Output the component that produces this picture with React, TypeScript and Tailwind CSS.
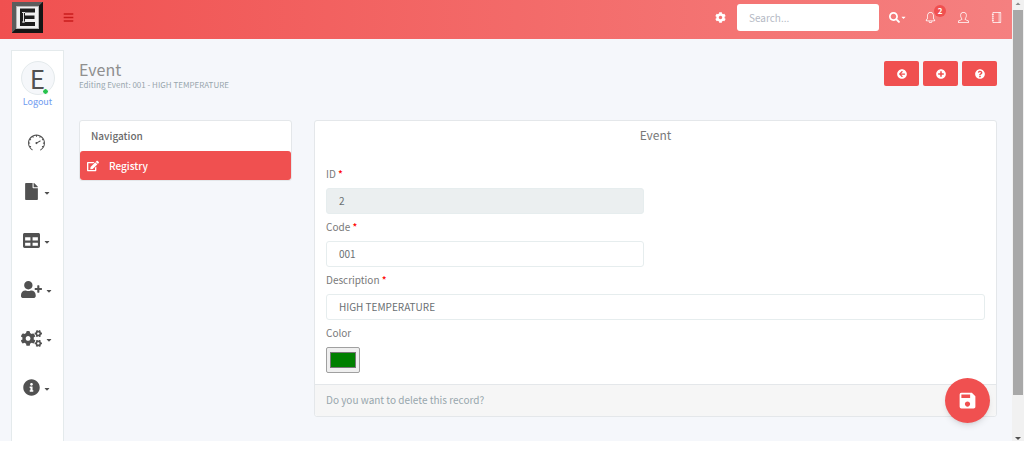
import type { ReactNode } from "react";
import type { IconType } from "react-icons";
import {
  FaArrowCircleLeft,
  FaBars,
  FaCaretDown,
  FaCog,
  FaCogs,
  FaEdit,
  FaFile,
  FaInfoCircle,
  FaPlusCircle,
  FaQuestionCircle,
  FaSearch,
  FaTable,
  FaUserPlus,
} from "react-icons/fa";
import { MdSave } from "react-icons/md";
import { SlBell, SlNotebook, SlSpeedometer, SlUser } from "react-icons/sl";

const menu: { label: string; icon: IconType; size: number; caret: boolean }[] = [
  { label: "Dashboard", icon: SlSpeedometer, size: 17, caret: false },
  { label: "Files", icon: FaFile, size: 17, caret: true },
  { label: "Tables", icon: FaTable, size: 17, caret: true },
  { label: "Users", icon: FaUserPlus, size: 21, caret: true },
  { label: "Settings", icon: FaCogs, size: 21, caret: true },
  { label: "Info", icon: FaInfoCircle, size: 17, caret: true },
];

const actions: { label: string; icon: IconType }[] = [
  { label: "Back", icon: FaArrowCircleLeft },
  { label: "Add", icon: FaPlusCircle },
  { label: "Help", icon: FaQuestionCircle },
];

function Logo() {
  return (
    <svg width="31" height="31" viewBox="0 0 31 31" aria-hidden="true">
      <rect width="31" height="31" fill="#111" />
      <path d="M0 0H31L27 4H4V27L0 31Z" fill="#5c5c5c" />
      <path d="M31 0V31H0L4 27H27V4Z" fill="#151515" />
      <rect x="4" y="4" width="23" height="23" fill="#b5b5b5" />
      <rect x="5" y="5" width="21" height="21" fill="#f0f0f0" />
      <path d="M8 6.500H23V10.500H13V13.500H22.500V17H13V20H23V24H8Z" fill="#1c1c1c" />
      <path d="M11.500 10V20.500M10 10.500H13M10 20H13" stroke="#ddd" strokeWidth="1" />
    </svg>
  );
}

function Header() {
  return (
    <header className="flex h-[39px] items-start justify-between bg-linear-to-r from-[#f05050] to-[#f58080] pl-3 pr-2.5 pt-0.5">
      <div className="flex items-start">
        <a href="#home" aria-label="Home">
          <Logo />
        </a>
        <button type="button" aria-label="Toggle menu" className="ml-5 flex h-[30px] items-center text-[#c91c1c]">
          <FaBars size={11} />
        </button>
      </div>
      <div className="flex h-[30px] items-center text-white">
        <button type="button" aria-label="Options" className="mr-[11px]">
          <FaCog size={11} />
        </button>
        <input
          type="search"
          aria-label="Search"
          placeholder="Search..."
          className="h-[27px] w-[142px] rounded-[3px] bg-white px-3 text-[10px] text-[#58666e] placeholder:text-[#b4b9c4]"
        />
        <button type="button" aria-label="Search in" className="ml-2.5 flex items-center">
          <FaSearch size={11} />
          <FaCaretDown size={7} />
        </button>
        <button type="button" aria-label="Notifications" className="relative ml-[18px]">
          <SlBell size={11} />
          <span className="absolute -right-[10px] -top-[7px] flex size-3 items-center justify-center rounded-full bg-[#f05050] text-[8px] font-bold leading-none">
            2
          </span>
        </button>
        <button type="button" aria-label="Profile" className="ml-[22px]">
          <SlUser size={11} />
        </button>
        <button type="button" aria-label="Notebook" className="ml-[22px]">
          <SlNotebook size={11} />
        </button>
      </div>
    </header>
  );
}

function Sidebar() {
  return (
    <aside className="mt-[11px] w-[53px] shrink-0 border border-b-0 border-[#e4eaec] bg-white pb-[29px] pt-2.5">
      <div className="flex flex-col items-center">
        <div className="relative flex size-[34px] items-center justify-center rounded-full border border-[#e4eaec] bg-[#f5f7fa] text-[26px] leading-none text-[#515151]">
          E
          <span className="absolute bottom-0 right-1.5 size-[5px] rounded-full bg-[#27c24c] outline-1 outline-[#f5f7fa]" />
        </div>
        <a href="#logout" className="text-[9px] leading-[14px] text-[#6f9bf0]">
          Logout
        </a>
      </div>
      <nav className="mt-[9px]">
        {menu.map(({ label, icon: Icon, size, caret }) => (
          <button
            key={label}
            type="button"
            aria-label={label}
            className="flex h-[49px] w-full items-center justify-center gap-[3px] pr-0.5 text-[#515151]"
          >
            <Icon size={size} />
            {caret && <FaCaretDown size={8} className="mt-0.5" />}
          </button>
        ))}
      </nav>
    </aside>
  );
}

function Field({ id, label, required, children }: { id: string; label: string; required?: boolean; children: ReactNode }) {
  return (
    <div>
      <label htmlFor={id} className="block pb-0.5 text-[10px] leading-[25px]">
        {label} {required && <span className="font-medium text-[#ff0000]">*</span>}
      </label>
      {children}
    </div>
  );
}

function EventForm() {
  const input = "block h-[26px] rounded-[3px] border border-[#e6edee] px-3 pb-0.5 text-[10px] text-[#6a6f73]";
  return (
    <form className="min-w-0 flex-1 rounded-[3px] border border-[#e4e7ea] bg-white">
      <div className="px-[11px] pb-[11px]">
        <h2 className="mb-3 text-center text-xs leading-7">Event</h2>
        <Field id="id" label="ID" required>
          <input id="id" readOnly defaultValue="2" className={`${input} w-[318px] bg-[#ebeff0]`} />
        </Field>
        <Field id="code" label="Code" required>
          <input id="code" defaultValue="001" className={`${input} w-[318px] bg-white`} />
        </Field>
        <Field id="description" label="Description" required>
          <input id="description" defaultValue="HIGH TEMPERATURE" className={`${input} w-full bg-white`} />
        </Field>
        <Field id="color" label="Color">
          <input
            id="color"
            type="color"
            defaultValue="#008000"
            className="block h-[26px] w-[34px] rounded-[2px] border border-[#a0a0a0] bg-[#efefef] px-px"
          />
        </Field>
      </div>
      <div className="rounded-b-[3px] border-t border-[#e4e7ea] bg-[#f6f6f6] px-[11px] pb-0.5 text-[10px] leading-[29px] text-[#98a6ad]">
        Do you want to delete this record?
      </div>
    </form>
  );
}

function Scrollbar() {
  return (
    <div className="flex w-3 shrink-0 flex-col items-center bg-[#f1f1f1]" aria-hidden="true">
      <svg width="12" height="10" viewBox="0 0 12 10">
        <path d="M3.500 5L6 2.500L8.500 5Z" fill="#8a8a8a" />
      </svg>
      <div className="w-2.5 grow bg-[#a8a8a8]" />
      <div className="h-9" />
      <svg width="12" height="10" viewBox="0 0 12 10">
        <path d="M3 6L6 9L9 6Z" fill="#505050" />
      </svg>
    </div>
  );
}

export default function App() {
  return (
    <div className="bg-white pb-5 font-['Noto_Sans_CJK_SC',sans-serif] text-[#797979]">
      <div className="flex bg-[#f5f7fb]">
        <div className="min-w-0 flex-1">
          <Header />
          <div className="flex pl-[11px]">
            <Sidebar />
            <main className="min-w-0 flex-1 pl-[15px] pr-[15px] pt-[22px]">
              <div className="flex h-[59px] items-start justify-between">
                <div>
                  <h1 className="text-base leading-4 text-[#8f8f8f]">Event</h1>
                  <p className="text-[8px] leading-[15px] text-[#98a6ad]">Editing Event: 001 - HIGH TEMPERATURE</p>
                </div>
                <div className="flex gap-1">
                  {actions.map(({ label, icon: Icon }) => (
                    <button
                      key={label}
                      type="button"
                      aria-label={label}
                      className="flex h-[25px] w-[35px] items-center justify-center rounded-[2px] bg-[#f05050] text-white"
                    >
                      <Icon size={10} />
                    </button>
                  ))}
                </div>
              </div>
              <div className="flex items-start gap-[22px]">
                <nav className="w-[213px] shrink-0 rounded-[3px] border border-[#e4e7ea] bg-white">
                  <h2 className="px-[11px] text-[10px] font-medium leading-[30px] text-[#6a6a6a]">Navigation</h2>
                  <a
                    href="#registry"
                    className="flex h-[29px] items-center gap-2.5 rounded-[3px] bg-[#f05050] px-[7px] text-[10px] font-medium text-white"
                  >
                    <FaEdit size={12} />
                    Registry
                  </a>
                </nav>
                <EventForm />
              </div>
            </main>
          </div>
        </div>
        <Scrollbar />
      </div>
      <button
        type="button"
        aria-label="Save"
        className="fixed bottom-[38px] right-[34px] flex size-[45px] items-center justify-center rounded-full bg-[#f05050] text-white shadow-md"
      >
        <MdSave size={21} />
      </button>
    </div>
  );
}
